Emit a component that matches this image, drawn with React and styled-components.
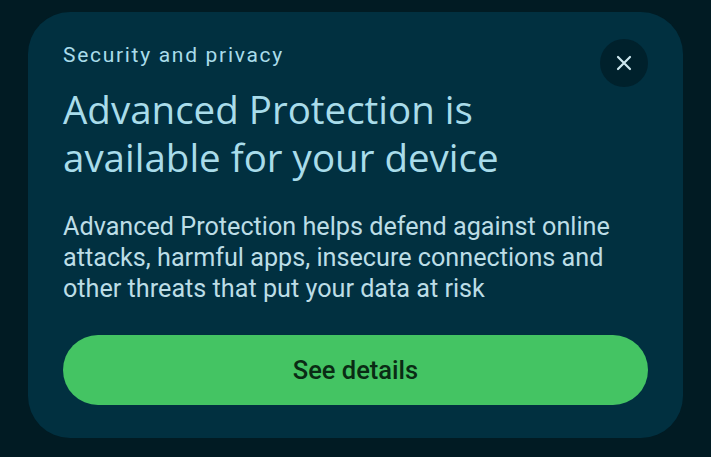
import React from "react";
import styled, { createGlobalStyle } from "styled-components";

const Global = createGlobalStyle`
  html, body { margin: 0; padding: 0; background: #011b23; }
  body { width: 711px; height: 457px; overflow: hidden; font-family: Roboto, "Noto Sans", sans-serif; }
`;

const Page = styled.div`
  width: 711px;
  height: 457px;
  box-sizing: border-box;
  padding: 12px 28px 19px 28px;
  display: flex;
`;

const Card = styled.section`
  position: relative;
  flex: 1;
  background: #013040;
  border-radius: 42px;
  padding: 30px 35px 33px 35px;
  display: flex;
  flex-direction: column;
`;

const Eyebrow = styled.div`
  color: #a9dcea;
  font-size: 21px;
  letter-spacing: 1.7px;
  line-height: 26px;
`;

const Title = styled.h1`
  margin: 17px 0 0 0;
  color: #a9dcea;
  font-family: "Open Sans", Roboto, sans-serif;
  font-weight: 400;
  font-size: 38.5px;
  line-height: 48px;
  letter-spacing: 0;
`;

const Body = styled.p`
  margin: 30px 0 0 0;
  color: #bcdde6;
  font-size: 25.2px;
  line-height: 31px;
`;

const Action = styled.button`
  margin-top: auto;
  height: 70px;
  border: none;
  border-radius: 35px;
  background: #44c463;
  color: #0a2b14;
  font-family: Roboto, sans-serif;
  font-size: 25.5px;
  font-weight: 500;
  cursor: pointer;
`;

const Close = styled.button`
  position: absolute;
  top: 27px;
  right: 35px;
  width: 48px;
  height: 48px;
  border-radius: 50%;
  border: none;
  background: #00212c;
  display: flex;
  align-items: center;
  justify-content: center;
  padding: 0;
`;

export default function App() {
  return (
    <>
      <Global />
      <Page>
        <Card>
          <Close aria-label="Close">
            <svg width="16" height="16" viewBox="0 0 16 16">
              <path d="M2 2 L14 14 M14 2 L2 14" stroke="#cde8ef" strokeWidth="2.2" strokeLinecap="round" />
            </svg>
          </Close>
          <Eyebrow>Security and privacy</Eyebrow>
          <Title>
            Advanced Protection is
            <br />
            available for your device
          </Title>
          <Body>
            Advanced Protection helps defend against online
            <br />
            attacks, harmful apps, insecure connections and
            <br />
            other threats that put your data at risk
          </Body>
          <Action>See details</Action>
        </Card>
      </Page>
    </>
  );
}
